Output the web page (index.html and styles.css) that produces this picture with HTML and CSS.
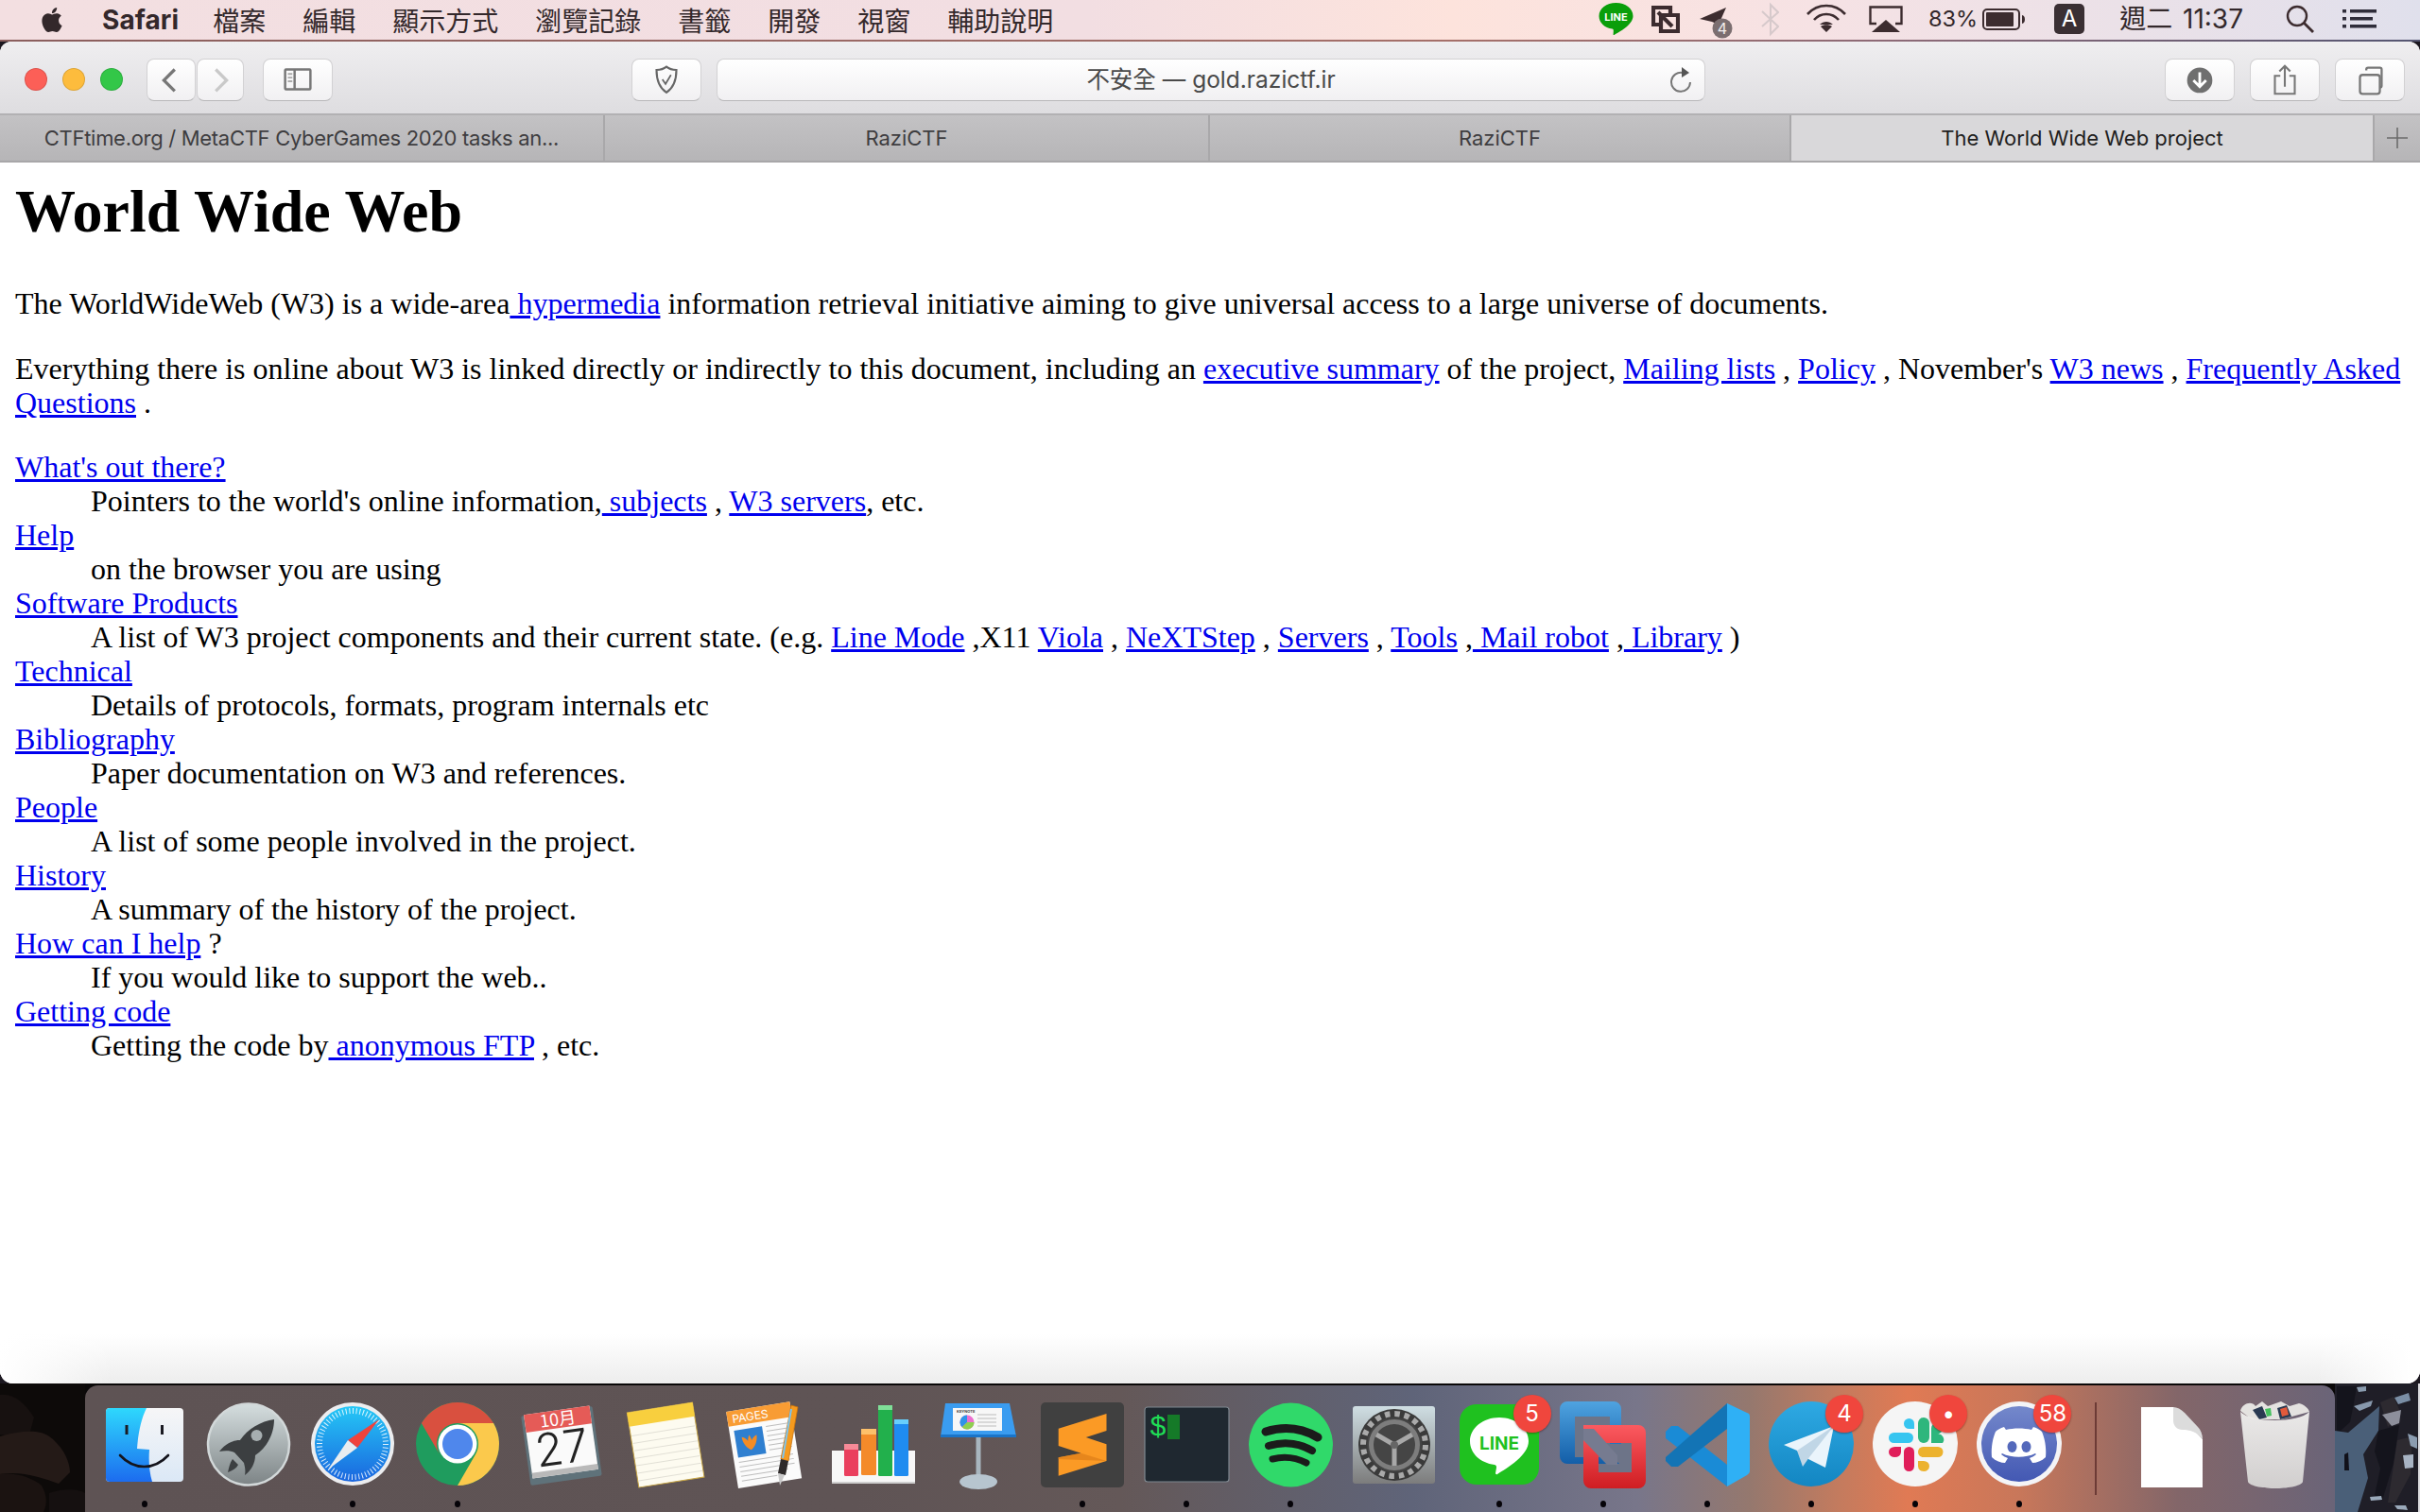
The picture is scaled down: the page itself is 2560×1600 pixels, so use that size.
FILE: index.html
```html
<!DOCTYPE html>
<html lang="zh-Hant">
<head>
<meta charset="utf-8">
<title>The World Wide Web project</title>
<link rel="stylesheet" href="styles.css">
</head>
<body>
<header class="menubar">
  <svg class="apple" viewBox="0 0 24 24"><path d="M12.152 6.896c-.948 0-2.415-1.078-3.96-1.04-2.04.027-3.91 1.183-4.961 3.014-2.117 3.675-.546 9.103 1.519 12.09 1.013 1.454 2.208 3.09 3.792 3.039 1.52-.065 2.09-.987 3.935-.987 1.831 0 2.35.987 3.96.948 1.637-.026 2.676-1.48 3.676-2.948 1.156-1.688 1.636-3.325 1.662-3.415-.039-.013-3.182-1.221-3.22-4.857-.026-3.04 2.48-4.494 2.597-4.559-1.429-2.09-3.623-2.324-4.39-2.376-2-.156-3.675 1.09-4.61 1.09zM15.53 3.83c.843-1.012 1.4-2.427 1.245-3.83-1.207.052-2.662.805-3.532 1.818-.78.896-1.454 2.338-1.273 3.714 1.338.104 2.715-.688 3.559-1.701"/></svg>
  <nav class="menus">
    <span class="app-name">Safari</span>
    <span>檔案</span><span>編輯</span><span>顯示方式</span><span>瀏覽記錄</span><span>書籤</span><span>開發</span><span>視窗</span><span>輔助說明</span>
  </nav>
  <div class="status">
    <svg class="st st-line" viewBox="0 0 37 44"><path fill="#0a9e0a" d="M18.5 5C8.5 5 .5 11 .5 19c0 7 6 12.500 14 13.500 1 .3 1.500 1 1.300 2.500l-.2 3.500c0 .6.500 .8 1 .4C22 36 36.500 28 36.500 19 36.500 11 28.500 5 18.500 5z"/><text class="st-line-t" x="18.500" y="24" text-anchor="middle">LINE</text></svg>
    <svg class="st st-sync" viewBox="0 0 30 44"><path fill="none" stroke="#3c2c2f" stroke-width="4.200" d="M20 18V10H2v18h8M10 18h18v17H10zM7 15l15 15"/></svg>
    <svg class="st st-tg" viewBox="0 0 36 44"><path fill="#3c2c2f" d="M1 22 L29 10 L21 28 L14 25 Z"/><circle cx="25" cy="32" r="10.500" fill="#7b6e70"/><text class="st-tg-t" x="25" y="38" text-anchor="middle">4</text></svg>
    <svg class="st st-bt" viewBox="0 0 19 44"><path fill="none" stroke="#d6c9cb" stroke-width="2" d="M1 14l17 16-8 8V7l8 8L1 30"/></svg>
    <svg class="st st-wifi" viewBox="0 0 42 44"><g fill="none" stroke="#3c2c2f" stroke-width="2.600"><path d="M1 17C12 5 30 5 41 17"/><path d="M8 23C15 15 27 15 34 23"/></g><path fill="#3c2c2f" d="M14 28c4-4 10-4 14 0l-7 0zM21 36l-6-6c3-2.500 9-2.500 12 0z"/></svg>
    <svg class="st st-air" viewBox="0 0 36 44"><path fill="none" stroke="#3c2c2f" stroke-width="2.400" d="M8 27H1.500V9.500h33V27H28"/><path fill="#3c2c2f" d="M18 23L33 36H3z"/></svg>
    <span class="st-text st-pct">83%</span>
    <svg class="st st-batt" viewBox="0 0 46 44"><rect x="1" y="12" width="38" height="21" rx="4" fill="none" stroke="#3c2c2f" stroke-width="2"/><rect x="4" y="15" width="29" height="15" rx="1" fill="#3c2c2f"/><path fill="#3c2c2f" d="M42 18c2 .5 3 2 3 4.500s-1 4-3 4.500z"/></svg>
    <span class="st-a">A</span>
    <span class="st-text st-time">週二 11:37</span>
    <svg class="st st-search" viewBox="0 0 30 44"><circle cx="12" cy="19" r="10" fill="none" stroke="#3c2c2f" stroke-width="2.400"/><path stroke="#3c2c2f" stroke-width="2.800" d="M19 26l10 10"/></svg>
    <svg class="st st-list" viewBox="0 0 36 44"><g fill="#2f2d3a"><rect x="0" y="12" width="4" height="3.500"/><rect x="0" y="20" width="4" height="3.500"/><rect x="0" y="28" width="4" height="3.500"/><rect x="8" y="12" width="28" height="3.500"/><rect x="8" y="20" width="24" height="3.500"/><rect x="8" y="28" width="28" height="3.500"/></g></svg>
  </div>
</header>

<div class="window">
  <div class="toolbar">
    <i class="light red"></i><i class="light yellow"></i><i class="light green"></i>
    <button class="btn back"><svg viewBox="0 0 50 45"><path fill="none" stroke="#777" stroke-width="3.400" d="M29 11L17 23l12 12"/></svg></button>
    <button class="btn fwd"><svg viewBox="0 0 50 45"><path fill="none" stroke="#c9c9c9" stroke-width="3.400" d="M20 11l12 12-12 12"/></svg></button>
    <button class="btn side"><svg viewBox="0 0 74 45"><g fill="none" stroke="#777" stroke-width="2.600"><rect x="23" y="11" width="28" height="22" rx="1"/><path d="M33.500 11v22"/></g><path stroke="#aaa" stroke-width="2" d="M26 16h5M26 20h5M26 24h5"/></svg></button>
    <button class="btn shield"><svg viewBox="0 0 74 45"><path fill="none" stroke="#666" stroke-width="2.200" d="M37 8c3 2.500 7 3.500 11 3.500 0 10-2 19-11 25-9-6-11-15-11-25 4 0 8-1 11-3.500z"/><path fill="none" stroke="#666" stroke-width="1.800" d="M32.500 22l3.500 5 6-10"/></svg></button>
    <div class="url">
      <span class="url-text">不安全 — gold.razictf.ir</span>
      <svg class="reload" viewBox="0 0 26 30"><path fill="none" stroke="#777" stroke-width="2" d="M15 7A10 10 0 1 0 23 17"/><path fill="#555" d="M14 1l8 6-8 5z"/></svg>
    </div>
    <button class="btn dl"><svg viewBox="0 0 74 45"><circle cx="37" cy="23" r="14" fill="#6f6f6f"/><path fill="none" stroke="#fff" stroke-width="3" d="M37 14v16M30 23l7 7 7-7"/></svg></button>
    <button class="btn share"><svg viewBox="0 0 74 45"><path fill="none" stroke="#777" stroke-width="2.200" d="M32 18h-6v20h22V18h-6M37 30V8M31 13l6-6 6 6"/></svg></button>
    <button class="btn tabs-btn"><svg viewBox="0 0 74 45"><g fill="none" stroke="#777" stroke-width="2.400"><rect x="26" y="17" width="22" height="21" rx="3"/><path d="M33 12V11a2 2 0 0 1 2-2h13a2 2 0 0 1 2 2v18a2 2 0 0 1-2 2"/></g></svg></button>
  </div>

  <div class="tabbar">
    <div class="tab t1">CTFtime.org / MetaCTF CyberGames 2020 tasks an...</div>
    <div class="tab t2">RaziCTF</div>
    <div class="tab t3">RaziCTF</div>
    <div class="tab t4 active">The World Wide Web project</div>
    <div class="tab newtab"><svg viewBox="0 0 24 24"><path stroke="#6b6b6b" stroke-width="1.600" d="M1 12h22M12 1v22"/></svg></div>
  </div>

  <main class="page">
    <h1>World Wide Web</h1>
    <p>The WorldWideWeb (W3) is a wide-area<a href="#"> hypermedia</a> information retrieval initiative aiming to give universal access to a large universe of documents.</p>
    <p>Everything there is online about W3 is linked directly or indirectly to this document, including an <a href="#">executive summary</a> of the project, <a href="#">Mailing lists</a> , <a href="#">Policy</a> , November's <a href="#">W3 news</a> , <a href="#">Frequently Asked Questions</a> .</p>
    <dl>
      <dt><a href="#">What's out there?</a></dt>
      <dd>Pointers to the world's online information,<a href="#"> subjects</a> , <a href="#">W3 servers</a>, etc.</dd>
      <dt><a href="#">Help</a></dt>
      <dd>on the browser you are using</dd>
      <dt><a href="#">Software Products</a></dt>
      <dd>A list of W3 project components and their current state. (e.g. <a href="#">Line Mode</a> ,X11 <a href="#">Viola</a> , <a href="#">NeXTStep</a> , <a href="#">Servers</a> , <a href="#">Tools</a> ,<a href="#"> Mail robot</a> ,<a href="#"> Library</a> )</dd>
      <dt><a href="#">Technical</a></dt>
      <dd>Details of protocols, formats, program internals etc</dd>
      <dt><a href="#">Bibliography</a></dt>
      <dd>Paper documentation on W3 and references.</dd>
      <dt><a href="#">People</a></dt>
      <dd>A list of some people involved in the project.</dd>
      <dt><a href="#">History</a></dt>
      <dd>A summary of the history of the project.</dd>
      <dt><a href="#">How can I help</a> ?</dt>
      <dd>If you would like to support the web..</dd>
      <dt><a href="#">Getting code</a></dt>
      <dd>Getting the code by<a href="#"> anonymous FTP</a> , etc.</dd>
    </dl>
  </main>
</div>

<footer class="desktop">
  <svg class="wall wall-left" viewBox="0 0 90 136" preserveAspectRatio="none">
    <rect width="90" height="136" fill="#0d0a09"/>
    <path fill="#171110" d="M0 12c14-2 26 8 36 24l-6 22L0 54z"/>
    <path fill="#241a17" d="M0 56c20-6 42-8 52 0 14 10 22 26 22 38l-12 12c-16-6-40-14-62-10z"/>
    <path fill="#1b1311" d="M0 96c18-2 34 4 44 12 6 10 6 20 2 28H0z"/>
    <path fill="#151010" d="M52 116c10-4 30-6 38 0v20H52z"/>
  </svg>
  <div class="dock">
    <div class="cell"><svg class="ico" viewBox="0 0 110 96"><defs><linearGradient id="fb" x1="0" y1="0" x2="0" y2="1"><stop offset="0" stop-color="#2ed8fd"/><stop offset="1" stop-color="#1c6cef"/></linearGradient><linearGradient id="fw" x1="0" y1="0" x2="0" y2="1"><stop offset="0" stop-color="#f6f6f7"/><stop offset="1" stop-color="#dbe8f6"/></linearGradient></defs><rect x="14" y="8" width="82" height="78" rx="4" fill="url(#fw)"/><path fill="url(#fb)" d="M18 8h39c-6 12-9 28-10 43l13 1c-1 12 0 24 3 34H18a4 4 0 0 1-4-4V12a4 4 0 0 1 4-4z"/><path fill="#1a1a22" d="M34.500 26h3v10h-3zM72 26h3v10h-3z"/><path fill="none" stroke="#14141c" stroke-width="2.600" stroke-linecap="round" d="M29 58c15 16 36 16 51 0"/></svg><i class="dot"></i></div>
    <div class="cell"><svg class="ico" viewBox="0 0 110 96"><defs><linearGradient id="lp" x1="0" y1="0" x2="0" y2="1"><stop offset="0" stop-color="#d5dedf"/><stop offset="1" stop-color="#7d8486"/></linearGradient></defs><circle cx="55" cy="46.500" r="43" fill="url(#lp)" stroke="#d2d8d9" stroke-width="2.500"/><path fill="#3c3f41" d="M82 20C68 22 54 30 46 42 38 42 30 46 24 54c6-1 12-1 16 1l10 11c1 4 2 8 1 13 7-5 11-13 11-21C74 50 82 36 82 20z"/><path fill="#3c3f41" d="M38 62l6 6c-2 4-6 6-11 8 1-4 2-10 5-14z"/><circle cx="63.500" cy="37" r="6" fill="#a6aeb0"/></svg></div>
    <div class="cell"><svg class="ico" viewBox="0 0 110 96"><defs><linearGradient id="sf" x1="0" y1="0" x2="0" y2="1"><stop offset="0" stop-color="#25c8f6"/><stop offset="1" stop-color="#1a66df"/></linearGradient></defs><circle cx="55" cy="46" r="44" fill="#ecedef"/><circle cx="55" cy="46" r="40" fill="url(#sf)"/><circle cx="55" cy="46" r="35" fill="none" stroke="#fff" stroke-opacity=".85" stroke-width="6" stroke-dasharray="1 2.660"/><path fill="#f0433c" d="M83 20L50 42l10 8z"/><path fill="#e9edf0" d="M29 73l21-31 10 8z"/></svg><i class="dot"></i></div>
    <div class="cell"><svg class="ico" viewBox="0 0 110 96"><circle cx="55" cy="46" r="44" fill="#1f9c5e"/><path fill="#d9503f" d="M16.900 24A44 44 0 0 1 93.100 24H55A22 22 0 0 0 36 57z"/><path fill="#fbc94c" d="M93.100 24A44 44 0 0 1 55 90L74 57A22 22 0 0 0 55 24z"/><circle cx="55" cy="46" r="20.500" fill="#fff"/><circle cx="55" cy="46" r="16" fill="#4f87ec"/></svg><i class="dot"></i></div>
    <div class="cell"><svg class="ico" viewBox="0 0 110 96"><g transform="rotate(-8 55 48)"><rect x="17" y="11" width="76" height="74" rx="2" fill="#5f727a"/><rect x="20" y="10" width="70" height="68" fill="#fafafa"/><path fill="#e55b57" d="M20 10h70v19H20z"/><path fill="#b9b9b9" d="M20 72h70v6H20z"/><text class="cal-m" x="55" y="26" text-anchor="middle">10月</text><text class="cal-d" x="55" y="67" text-anchor="middle">27</text></g></svg></div>
    <div class="cell"><svg class="ico" viewBox="0 0 110 96"><g transform="rotate(-9 55 46)"><rect x="20" y="7" width="70" height="80" fill="#fdfbf0" stroke="#c7a544" stroke-width="1"/><rect x="20" y="7" width="70" height="15" fill="#f8cf3e"/><path stroke="#e2e0d6" stroke-width="1" d="M21 32h68M21 40h68M21 48h68M21 56h68M21 64h68M21 72h68M21 80h68"/></g></svg></div>
    <div class="cell"><svg class="ico" viewBox="0 0 110 96"><g transform="rotate(-9 50 46)"><rect x="15" y="6" width="68" height="82" fill="#fbfbfb"/><rect x="15" y="6" width="68" height="16" fill="#f89c34"/><text class="pg-t" x="20" y="19">PAGES</text><rect x="20" y="27" width="30" height="29" fill="#2f7fd0"/><path fill="#f48c25" d="M35 50c-5-3-8-9-8-15 3 1 5 3 6 5 0-2 1-4 2-6 1 2 2 4 2 6 1-2 3-4 6-5 0 6-3 12-8 15z"/><path stroke="#bdbdbd" stroke-width="1" d="M54 28h24M54 33h24M54 38h24M54 43h24M54 48h24M54 53h24M20 61h58M20 66h58M20 71h58M20 76h50M20 81h38"/></g><path fill="#f59a1e" stroke="#c8710c" stroke-width=".8" d="M78 5l7 2-10 57-8-2z"/><path fill="#2e2a2a" d="M67 62l8 2-3 15-8-2z"/><path fill="#c9c9c9" d="M64 77l7 2-5 11z"/><path stroke="#7cc4ef" stroke-width="2" d="M78 9l-9 52"/></svg></div>
    <div class="cell"><svg class="ico" viewBox="0 0 110 96"><path fill="#f7f7f7" d="M11 53h88v33H11z"/><path fill="#cfcfcf" d="M11 86h88v2H11z"/><rect x="24" y="46" width="15" height="34" rx="1.500" fill="#ea3f5e"/><rect x="42" y="30" width="16" height="49" rx="1.500" fill="#f48a2a"/><rect x="60" y="5" width="15" height="75" rx="1.500" fill="#22b04c"/><rect x="77" y="20" width="15" height="60" rx="1.500" fill="#1f8cf0"/><rect x="24" y="46" width="15" height="6" fill="#f58a97"/><rect x="42" y="30" width="16" height="6" fill="#fdc06a"/><rect x="60" y="5" width="15" height="5" fill="#7fe098"/><rect x="77" y="20" width="15" height="5" fill="#67cffc"/></svg></div>
    <div class="cell"><svg class="ico" viewBox="0 0 110 96"><path fill="#3a9cf0" d="M20 3h68l7 35H15z"/><path fill="#1a74c8" d="M15 36h80v3H15z"/><rect x="28" y="8" width="52" height="24" fill="#f7f7f7"/><text class="kn-t" x="32" y="13">KEYNOTE</text><circle cx="43" cy="23" r="7.500" fill="#ec6ed0"/><path fill="#8ed04f" d="M43 23l7.500 0a7.500 7.500 0 0 1-13 5z"/><path fill="#2f93e8" d="M43 23l-5.500 5a7.500 7.500 0 0 1 5.500-12.500z"/><path stroke="#bbb" d="M54 15h20M54 19h20M54 23h20M54 27h20"/><rect x="52.500" y="39" width="5" height="45" fill="#a8b6bf"/><ellipse cx="55" cy="86" rx="20" ry="8" fill="#b7c5cf"/></svg></div>
    <div class="cell"><svg class="ico" viewBox="0 0 110 96"><rect x="11" y="2" width="88" height="90" rx="5" fill="#404040"/><path fill="#fb9a25" d="M80.500 14L29.700 29.700V48L53.500 55.700 29.700 60.300V79.700L80.500 64V46.300L58.800 39 80.500 32z"/><path fill="#dd7e18" d="M53.500 55.700L29.700 60.300 29.700 62 80.500 64z" opacity=".7"/></svg><i class="dot"></i></div>
    <div class="cell"><svg class="ico" viewBox="0 0 110 96"><rect x="11" y="7" width="89" height="79" rx="3" fill="#1f2830" stroke="#7f8890" stroke-width="1.200"/><text class="tm-t" x="16" y="37">$</text><rect x="35" y="15" width="13" height="26" fill="#157a28"/></svg><i class="dot"></i></div>
    <div class="cell"><svg class="ico" viewBox="0 0 110 96"><circle cx="55.500" cy="47" r="44.500" fill="#30d96a"/><g fill="none" stroke="#1b1b1b" stroke-linecap="round"><path stroke-width="9" d="M29 33c19-6 38-4 55 6"/><path stroke-width="8" d="M32 48c16-5 32-3 46 5"/><path stroke-width="7" d="M36 62c12-3 24-2 36 4"/></g></svg><i class="dot"></i></div>
    <div class="cell"><svg class="ico" viewBox="0 0 110 96"><defs><linearGradient id="sp" x1="0" y1="0" x2="0" y2="1"><stop offset="0" stop-color="#cfdee3"/><stop offset="1" stop-color="#7c7c7c"/></linearGradient></defs><rect x="11" y="6" width="87" height="82" rx="3" fill="url(#sp)"/><circle cx="55" cy="47" r="38" fill="#3a3a3a"/><circle cx="55" cy="47" r="33" fill="none" stroke="#a9a9a9" stroke-width="6" stroke-dasharray="5.500 4.870"/><circle cx="55" cy="47" r="28" fill="#7d7d7d" stroke="#444" stroke-width="2"/><circle cx="55" cy="47" r="22" fill="#454545"/><g stroke="#a8a8a8" stroke-width="5"><path d="M55 47v22M55 47L36 36M55 47l19-11"/></g><circle cx="55" cy="47" r="4" fill="#666"/></svg></div>
    <div class="cell"><svg class="ico" viewBox="0 0 110 96"><rect x="13" y="4" width="84" height="85" rx="18" fill="#1fc11f"/><path fill="#fff" d="M55 18c-17 0-31 11-31 25 0 13 11 23 26 25 2 .5 2 1.500 2 3l-1 6c0 1 1 1.500 2 1C64 71 86 58 86 43 86 29 72 18 55 18z"/><text class="ln-t" x="55" y="52" text-anchor="middle">LINE</text></svg><span class="badge">5</span><i class="dot"></i></div>
    <div class="cell"><svg class="ico" viewBox="0 0 110 96"><defs><linearGradient id="vb" x1="0" y1="0" x2="0" y2="1"><stop offset="0" stop-color="#4fa3e0"/><stop offset="1" stop-color="#135ea8"/></linearGradient><linearGradient id="vr" x1="0" y1="0" x2="0" y2="1"><stop offset="0" stop-color="#fb5a60"/><stop offset="1" stop-color="#cf1d22"/></linearGradient></defs><path fill="#6d7488" d="M25 17h37v43H25zM50 45h35v31H50z"/><path fill="url(#vb)" fill-rule="evenodd" d="M17 1h49a8 8 0 0 1 8 8v37H62V17H25v43h40l7 7H17a8 8 0 0 1-8-8V9a8 8 0 0 1 8-8z"/><path fill="url(#vr)" fill-rule="evenodd" d="M34 26h58a8 8 0 0 1 8 8v51a8 8 0 0 1-8 8H42a8 8 0 0 1-8-8zM50 45v31h35V45z"/><path fill="#767b90" d="M34 30h11l25 28v10H59L34 42z"/></svg><i class="dot"></i></div>
    <div class="cell"><svg class="ico" viewBox="0 0 110 96"><path fill="#1a8bd6" d="M11 33l6-6h7l52 41v23L11 40z"/><path fill="#1374b5" d="M76 3v27L24 70h-7l-6-6v-4z"/><path fill="#2fb0f5" d="M76 3l21 10a4 4 0 0 1 3 4v58a5 5 0 0 1-3 4L76 91z"/></svg><i class="dot"></i></div>
    <div class="cell"><svg class="ico" viewBox="0 0 110 96"><defs><linearGradient id="tg" x1="0" y1="0" x2="0" y2="1"><stop offset="0" stop-color="#2ea9e3"/><stop offset="1" stop-color="#1386c2"/></linearGradient></defs><circle cx="55" cy="46" r="45" fill="url(#tg)"/><path fill="#eaf4fb" d="M79 27L26 47l14 6 8 7 22 11z"/><path fill="#c0d6e6" d="M40 53l6 17 7-10 26-33z"/></svg><span class="badge">4</span><i class="dot"></i></div>
    <div class="cell"><svg class="ico" viewBox="0 0 110 96"><circle cx="55" cy="46" r="45" fill="#f5f5f5"/><g fill="#36c5f0"><rect x="27" y="34" width="26" height="11" rx="5.500"/><path d="M43 24.500a5.500 5.500 0 1 1 11 0V30H48.500A5.500 5.500 0 0 1 43 24.500z"/></g><g fill="#2eb67d"><rect x="58" y="18" width="12" height="27" rx="6"/><path d="M72 45V29.500a6 6 0 1 1 6 6 6 6 0 0 1 6 9.500z"/></g><g fill="#e01e5a"><rect x="43" y="49" width="11" height="26" rx="5.500"/><path d="M40 49v5.500a6.500 5.500 0 1 1-6.500-5.500z"/></g><g fill="#ecb22e"><rect x="58" y="49" width="26.500" height="11" rx="5.500"/><path d="M58 64h6a6 5.500 0 1 1-6 5.500z"/></g></svg><span class="badge">•</span><i class="dot"></i></div>
    <div class="cell"><svg class="ico" viewBox="0 0 110 96"><defs><linearGradient id="dc" x1="0" y1="0" x2="0" y2="1"><stop offset="0" stop-color="#7488cb"/><stop offset="1" stop-color="#4358b3"/></linearGradient></defs><circle cx="55" cy="46" r="45" fill="#f4f4f6"/><circle cx="55" cy="46" r="40" fill="url(#dc)"/><path fill="#fff" d="M39 28c-4 1-7 3-9 5-3 7-5 17-4 27 4 4 10 6 14 6l3-5c-2-1-5-2-7-4l1-1c10 5 25 5 35 0l1 1c-2 2-5 3-7 4l3 5c4 0 10-2 14-6 1-10-1-20-4-27-2-2-5-4-9-5l-2 3c-8-2-19-2-27 0z"/><ellipse cx="47.500" cy="49" rx="5" ry="6" fill="#5469bb"/><ellipse cx="62.500" cy="49" rx="5" ry="6" fill="#5469bb"/></svg><span class="badge">58</span><i class="dot"></i></div>
    <div class="sep"></div>
    <div class="cell"><svg class="ico" viewBox="0 0 110 96"><path fill="#fff" d="M23 7h34l31 34v51H23z"/><path fill="#dcdcdc" d="M57 7c4 0 8 2 12 6l14 15c3 3 5 8 5 13-6-8-14-10-21-10-6 0-10-4-10-10z"/></svg></div>
    <div class="cell"><svg class="ico" viewBox="0 0 110 96"><defs><linearGradient id="tr" x1="0" y1="0" x2="0" y2="1"><stop offset="0" stop-color="#efeeed"/><stop offset="1" stop-color="#d5d3d2"/></linearGradient></defs><path fill="#e4e2e0" d="M18 11c2-8 12-11 16-5l7-5 6 5 14-5 9 5 10-3c5 1 10 5 11 9l-30 8H30z"/><path fill="#2a3a52" d="M31 10l10-4 5 12-8 2zM57 8l10-3 5 12-12 3z"/><path fill="#e35a3c" d="M60 9l7-2 2 8-7 2z"/><path fill="#45c05e" d="M44 9l6-1 1 8-5 1z"/><path fill="url(#tr)" d="M18 12c12 12 61 12 73 0l-7 74c-2 5-18 7-29 7s-27-2-29-7z" opacity=".96"/></svg></div>
  </div>
  <svg class="wall wall-right" viewBox="0 0 88 136" preserveAspectRatio="none">
    <rect width="88" height="136" fill="#1f1e27"/>
    <path fill="#4a5f78" d="M0 50l14 2L40 30l7-6-1 26-16 25 5 25-11 36H0z"/>
    <path fill="#14141c" d="M2 3l21 0-3 18-4 20-10 9H2zM46 50l22-6-6 40-12 40-8-6 6-28-6-18z"/>
    <path fill="#2d2a30" d="M48 20l14-6 8 18-14 14zM66 60l16-4-2 40-16 30-8 0z"/>
    <path fill="#8798ac" d="M20 24l20-6-2 6-12 5z"/>
    <path fill="#8d8f9b" d="M50 33l20-5-2 14-8 3z"/>
    <path fill="#7a8ea5" d="M63 15l15-5 2 8-13 4z"/>
    <path fill="#a8b4c4" d="M72 76l11-1 0 14-9 1z"/>
    <path fill="#8b9cb0" d="M77 53l10 4v12l-7-3z"/>
    <path fill="#8a9caf" d="M23 4l10-1 0 5-8 1z"/>
    <path fill="#11111a" d="M10 75l4-2 1 19-5 0z"/>
    <path fill="#9aa9ba" d="M63 129l12 0 2 5-11-1zM37 120l12-1 1 4-12 1z"/>
  </svg>
</footer>
</body>
</html>
```

FILE: styles.css
```css
* { box-sizing: border-box; }
html, body { margin: 0; padding: 0; }
body {
  width: 2560px;
  height: 1600px;
  overflow: hidden;
  display: flex;
  flex-direction: column;
  background: #1c1820;
  font-family: Inter, "Noto Sans CJK TC", sans-serif;
}

/* menu bar */
.menubar {
  height: 44px;
  flex: none;
  display: flex;
  align-items: center;
  color: #33282b;
  background: linear-gradient(90deg, #f3dfe1 0%, #f2dee2 45%, #fde3dc 60%, #f6e2e4 75%, #e0e0ec 100%);
  border-bottom: 2px solid;
  border-image: linear-gradient(90deg, #8b5f5e 0%, #a5706a 60%, #8a6a78 80%, #555672 100%) 1;
}
.apple { width: 26px; height: 30px; margin-left: 42px; fill: #33282b; flex: none; }
.menus {
  display: flex;
  gap: 39px;
  margin-left: 40px;
  font: 400 28px/42px "Noto Sans CJK TC", sans-serif;
}
.app-name { font: 700 28px/42px Inter, sans-serif; margin-right: -3px; letter-spacing: .1px; }
.status { margin-left: auto; padding-right: 46px; display: flex; align-items: center; height: 44px; margin-top: -2px; }
.st { height: 44px; flex: none; display: block; }
.st-line { width: 37px; }
.st-line-t { font: 700 11px Inter, sans-serif; fill: #fff; }
.st-sync { width: 30px; margin-left: 19px; }
.st-tg { width: 36px; margin-left: 20px; }
.st-tg-t { font: 400 16px Inter, sans-serif; fill: #f3eeee; }
.st-bt { width: 19px; margin-left: 30px; }
.st-wifi { width: 42px; margin-left: 29px; }
.st-air { width: 36px; margin-left: 24px; }
.st-text { font: 400 25px/44px Inter, "Noto Sans CJK TC", sans-serif; color: #33282b; white-space: nowrap; }
.st-pct { margin-left: 27px; font-size: 23.500px; }
.st-batt { width: 46px; margin-left: 5px; }
.st-a {
  width: 32px; height: 32px; margin-left: 30px;
  background: #3a2f33; color: #fff; border-radius: 5px;
  font: 400 24px/32px Inter, sans-serif; text-align: center;
}
.st-time { margin-left: 37px; font-size: 28px; word-spacing: 3px; }
.st-search { width: 30px; margin-left: 45px; }
.st-list { width: 36px; margin-left: 30px; }

/* window */
.window {
  flex: 1;
  min-height: 0;
  display: flex;
  flex-direction: column;
  border-radius: 12px 12px 14px 14px;
  overflow: hidden;
  background: #fff;
}
.toolbar {
  height: 78px;
  flex: none;
  display: flex;
  align-items: flex-start;
  padding: 18px 16px 0 26px;
  background: linear-gradient(#efeef0, #dedde0);
  border-bottom: 2px solid #b2b1b3;
}
.light {
  width: 24px; height: 24px; border-radius: 50%; margin: 10px 16px 0 0; flex: none;
  border: 1px solid rgba(0,0,0,.12);
}
.red { background: #fc5f57; }
.yellow { background: #fdbc3d; }
.green { background: #33c748; }
.btn {
  height: 45px;
  padding: 0;
  flex: none;
  background: linear-gradient(#ffffff, #f1f0f2);
  border: 1px solid #d2d1d3;
  border-bottom-color: #b8b7b9;
  border-radius: 8px;
}
.btn svg { display: block; width: 100%; height: 100%; }
.back { width: 52px; margin-left: 9px; }
.fwd { width: 50px; margin-left: 1px; }
.side { width: 74px; margin-left: 20px; }
.shield { width: 74px; margin-left: 316px; }
.url {
  width: 1046px;
  height: 45px;
  margin-left: 16px;
  flex: none;
  position: relative;
  display: flex;
  align-items: center;
  justify-content: center;
  background: linear-gradient(#ffffff, #f1f0f2);
  border: 1px solid #d2d1d3;
  border-bottom-color: #b8b7b9;
  border-radius: 8px;
}
.url-text { font: 400 24.500px/43px Inter, "Noto Sans CJK TC", sans-serif; color: #4a4a4a; }
.reload { position: absolute; right: 12px; top: 7px; width: 26px; height: 30px; }
.dl { width: 74px; margin-left: auto; }
.share { width: 74px; margin-left: 16px; }
.tabs-btn { width: 74px; margin-left: 16px; }

.tabbar {
  height: 50px;
  flex: none;
  display: flex;
  background: linear-gradient(#c3c2c4, #b6b5b7);
  border-bottom: 2px solid #a8a7a9;
}
.tab {
  flex: none;
  display: flex;
  align-items: center;
  justify-content: center;
  font: 400 22px/48px Inter, sans-serif;
  color: #3e3d40;
  border-right: 2px solid #a9a8aa;
  white-space: nowrap;
}
.t1 { width: 640px; letter-spacing: -.3px; }
.t2 { width: 640px; }
.t3 { width: 615px; }
.t4 { width: 617px; }
.active { background: #d9d8da; color: #1f1e20; }
.newtab { flex: 1; border-right: 0; }
.newtab svg { width: 24px; height: 24px; }

/* document */
.page {
  flex: 1;
  min-height: 0;
  padding: 16px 16px 0;
  color: #000;
  font: 400 32px/36px "Liberation Serif", "Times New Roman", serif;
  background:
    linear-gradient(90deg, #fff, rgba(255,255,255,0) 120px, rgba(255,255,255,0) 2450px, #fff 2550px),
    linear-gradient(#fff 1240px, #ededed);
}
.page a { color: #0000ee; text-decoration: underline; }
.page h1 { font: 700 64px/72px "Liberation Serif", serif; margin: 0 0 43px; }
.page p { margin: 0 0 33px; }
.page dl { margin: -1px 0 0; }
.page dd { margin: 0 0 0 80px; }

/* desktop and dock */
.desktop { height: 136px; flex: none; display: flex; background: #0a0808; }
.wall { display: block; flex: none; height: 136px; }
.wall-left { width: 90px; }
.wall-right { width: 90px; border-right: 2px solid #dcdce0; }
.dock {
  width: 2380px;
  margin-top: 2px;
  flex: none;
  display: flex;
  align-items: flex-start;
  padding: 16px 8px 0;
  border-radius: 14px 14px 0 0;
  background: linear-gradient(90deg, #5e5354 0%, #5f5455 34%, #645858 46%, #5f6479 59%, #78768a 69%, #95786e 74%, #c47b5e 78%, #e07a54 81%, #c8775a 86%, #836669 93%, #6a6478 100%);
}
.cell { width: 110.2px; flex: none; position: relative; display: flex; flex-direction: column; align-items: center; }
.ico { width: 110px; height: 96px; display: block; overflow: visible; }
.dot { width: 6px; height: 7px; margin-top: 10px; border-radius: 50%; background: #050308; }
.sep { width: 2px; height: 98px; margin: 2px 24px 0 24px; flex: none; background: rgba(70,25,25,.6); }
.badge {
  position: absolute;
  left: calc(50% + 15px);
  top: -6px;
  width: 40px;
  height: 40px;
  border-radius: 50%;
  background: #f0463d;
  color: #fff;
  font: 400 24px/40px Inter, sans-serif;
  text-align: center;
  box-shadow: 0 1px 2px rgba(60,0,0,.4);
}

/* text inside dock icons */
.cal-m { font: 400 18px "Noto Sans CJK TC", sans-serif; fill: #fff; }
.cal-d { font: 300 48px Inter, sans-serif; fill: #222; }
.pg-t { font: 400 12px Inter, sans-serif; fill: #fff; }
.kn-t { font: 700 4px Inter, sans-serif; fill: #444; }
.tm-t { font: 400 30px "Liberation Mono", monospace; fill: #1fdc55; }
.ln-t { font: 700 19px Inter, sans-serif; fill: #1fc11f; }
```
